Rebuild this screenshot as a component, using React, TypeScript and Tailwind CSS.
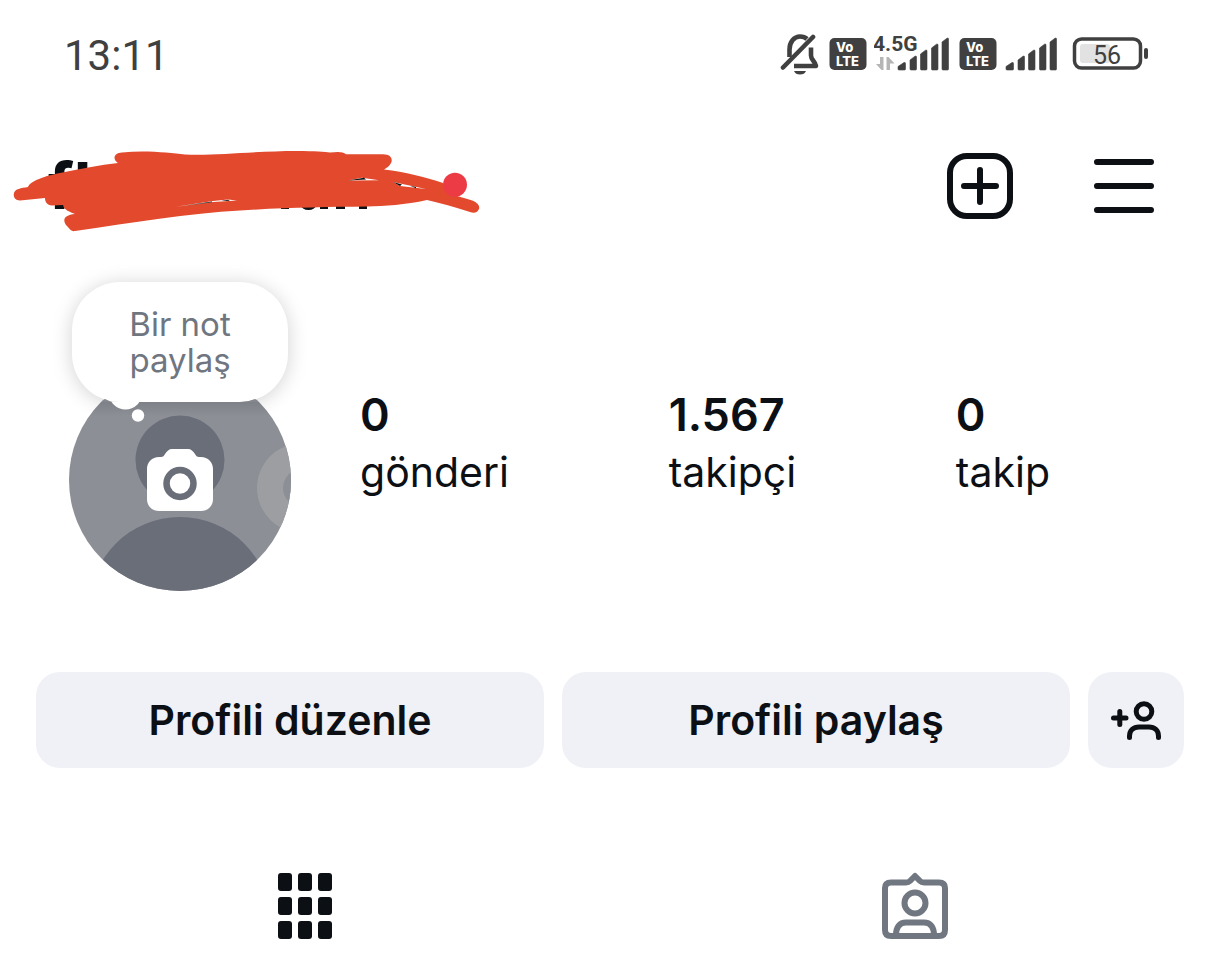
import React from "react";

const STATS = [
  { value: "0", label: "gönderi" },
  { value: "1.567", label: "takipçi" },
  { value: "0", label: "takip" },
];

const MutedBell = () => (
  <svg className="w-[42px] h-11" viewBox="780 32 42 44" fill="none" aria-label="Sessiz">
    <path
      d="M789.500 57V49.500C789.500 42 794 36.500 800 36.500C803 36.500 805.500 37.500 807 39M811 47.500V55.500C811 60 815 61 816 66H794"
      stroke="#404040"
      strokeWidth="4.600"
      strokeLinejoin="round"
    />
    <path d="M783 67.500L813 37" stroke="#404040" strokeWidth="4.600" strokeLinecap="round" />
    <path d="M794 71H806C805 73.500 803 74.500 800 74.500C797 74.500 795 73.500 794 71Z" fill="#404040" />
  </svg>
);

const VoLte = () => (
  <svg className="w-10 h-11" viewBox="0 0 40 44" aria-label="VoLTE">
    <rect x="1.500" y="6" width="37" height="32" rx="5" fill="#404040" />
    <text fill="#fff" fontSize="13" className="font-['Inter',sans-serif] font-extrabold">
      <tspan x="8" y="20">Vo</tspan>
      <tspan x="8" y="34">LTE</tspan>
    </text>
  </svg>
);

const Bars = () => (
  <path
    d="M0 37V34.500L6 30.500Q7.500 30 7.500 31.500V37Q7.500 38 6.500 38H1Q0 38 0 37ZM12 37V28L17 24.200Q18.500 23.500 18.500 25V37Q18.500 38 17.500 38H13Q12 38 12 37ZM22.500 37V22L27.500 18.200Q29 17.500 29 19V37Q29 38 28 38H23.500Q22.500 38 22.500 37ZM33.500 37V16L38.500 12.200Q40 11.500 40 13V37Q40 38 39 38H34.500Q33.500 38 33.500 37ZM44 37V10L49 6.200Q50.500 5.500 50.500 7V37Q50.500 38 49.500 38H45Q44 38 44 37Z"
    fill="#404040"
    stroke="#404040"
    strokeWidth="0.600"
  />
);

const StatusBar = () => (
  <div className="flex h-[108px] items-center justify-between pl-16 pr-[70px] font-['Roboto',sans-serif] text-[#404040]">
    <time className="mt-1 text-[42px] leading-[50px]">13:11</time>
    <div className="flex items-center gap-1.5">
      <MutedBell />
      <VoLte />
      <svg className="w-[78px] h-11" viewBox="0 0 78 44" aria-label="4.5G">
        <text x="-1" y="19" fontSize="21" fontWeight="700" fill="#404040">4.5G</text>
        <path d="M9.500 25V38H7.500L2 32H6V25ZM12.500 38V25H14.500L20.500 31.500H16V38Z" fill="#b5b5b5" />
        <g transform="translate(24 0)">
          <Bars />
        </g>
      </svg>
      <VoLte />
      <svg className="w-14 h-11" viewBox="-2 0 56 44" aria-label="Sinyal">
        <Bars />
      </svg>
      <svg className="w-[84px] h-11" viewBox="0 0 84 44" aria-label="Pil">
        <rect x="8.500" y="7" width="66" height="29" rx="7" fill="none" stroke="#404040" strokeWidth="3.500" />
        <rect x="14" y="12" width="30" height="19" rx="3" fill="#e2e2e2" />
        <rect x="78" y="16" width="4" height="11" rx="2" fill="#404040" />
        <text x="27" y="32" fontSize="25" fill="#404040">56</text>
      </svg>
    </div>
  </div>
);

const Header = () => (
  <header className="flex h-[156px] items-center justify-between pr-[60px]">
    <svg className="w-[500px] h-[100px]" viewBox="0 136 500 100">
      <text x="48" y="208.500" fontSize="65" fontWeight="700" fill="#0c1014">fl</text>
      <path
        d="M281 204H289V209H281ZM300 204H317Q315 210 308.500 210Q302 210 300 204ZM320 204H328V209H320ZM336 204H345V209H336ZM359 204H367V209H359Z"
        fill="#0c1014"
      />
      <path
        d="M14 193C15 189 21 188 28 187C30 181 45 176 60 173C80 169 100 165 118 163C112 159 114 153 122 152.500C147 150 170 153 185 154.500C215 156 255 151 297 151C315 151 325 152 330 152.500C338 151.500 343 151.500 346 154.300H383C391 154.500 393 159 391 163C389 167 386 168 384 169.500C405 172 425 177 443 183L448 193C457 196 466 198.500 473 200.700C478 203 480 206 479 209C477 213 474 213.500 470 212C455 207 440 203 427 200C405 205 385 206 367 206.500C325 207 285 207.500 240 210.500C190 213 130 223 75 231C71 232 69 228 66 225C62 219 65 215 75 214C70 212 64 210 63 205L52 205.500C47 205 45 202 45 198L20 200.500C15 200 13 197 14 193Z"
        fill="#e2492d"
      />
      <path d="M176 206.800L213 201L228 199.500L237 200.500L213 202ZM348 180.500L362 177.800L379 180.300ZM393 182L426 189L400 186Z" fill="#fff" />
      <path d="M184 205.800L212 201.500V202.300ZM221 201L228 199.700L230 200.700ZM348 180.500L364 177.700L366 179.500ZM393 182L402 184.500L400 186ZM410 185.700L416 187V188.200Z" fill="#0c1014" />
      <circle cx="455" cy="184.700" r="12" fill="#ec3b45" />
    </svg>
    <div className="flex gap-[72px]">
      <button aria-label="Oluştur">
        <svg className="size-[72px]" viewBox="0 0 72 72" fill="none" stroke="#0c1014" strokeWidth="6" strokeLinecap="round">
          <rect x="6" y="6" width="60" height="60" rx="17" />
          <path d="M20 36H52M36 20V52" />
        </svg>
      </button>
      <button aria-label="Menü">
        <svg className="size-[72px]" viewBox="0 0 72 72" fill="none" stroke="#0c1014" strokeWidth="6" strokeLinecap="round">
          <path d="M9 12H63M9 36H63M9 60H63" />
        </svg>
      </button>
    </div>
  </header>
);

const Avatar = () => (
  <div className="flex w-[222px] shrink-0 flex-col items-center">
    <button className="relative z-10 h-[120px] w-[216px] rounded-[48px] bg-white px-12 text-[33px] leading-9 text-[#6f7680] shadow-[0_2px_20px_rgba(0,0,0,0.18)]">
      Bir not paylaş
    </button>
    <button className="relative z-10 -mt-[33px]" aria-label="Profil fotoğrafı ekle">
      <svg className="size-[222px]" viewBox="0 0 222 222">
        <defs>
          <clipPath id="avatar">
            <circle cx="111" cy="111" r="111" />
          </clipPath>
          <clipPath id="below">
            <rect y="33" width="222" height="189" />
          </clipPath>
          <linearGradient id="shade" x2="0" y2="1">
            <stop stopColor="#000" stopOpacity="0.1" />
            <stop offset="1" stopColor="#000" stopOpacity="0" />
          </linearGradient>
        </defs>
        <g clipPath="url(#below)">
          <g clipPath="url(#avatar)">
            <rect width="222" height="222" fill="#8c8f96" />
            <circle cx="111" cy="91" r="44.500" fill="#6a6e79" />
            <circle cx="111" cy="239" r="91" fill="#6a6e79" />
            <circle cx="233" cy="119" r="45" fill="#9d9ea2" />
            <circle cx="233" cy="119" r="19" fill="#8c8f96" />
            <rect y="33" width="222" height="14" fill="url(#shade)" />
          </g>
          <circle cx="56.500" cy="24" r="16.500" fill="#fff" />
          <circle cx="69" cy="46.500" r="6.200" fill="#fff" />
        </g>
        <path d="M34 31L36 30Q40 32 43 33H32ZM188 31L186 30Q179 33 171 33H190Z" fill="#84878e" />
        <path
          d="M92 88C94 88 95 87 96 85C98 82 100 80 103 80H119C122 80 124 82 126 85C127 87 128 88 130 88H132C139 88 144 93 144 100V130C144 137 139 142 132 142H90C83 142 78 137 78 130V100C78 93 83 88 90 88Z"
          fill="#fff"
        />
        <circle cx="111" cy="114.500" r="13.500" fill="none" stroke="#6a6e79" strokeWidth="6.500" />
      </svg>
    </button>
  </div>
);

const Profile = () => (
  <section className="flex items-start pl-[69px] pr-[170px] pt-[18px]">
    <Avatar />
    <div className="ml-[69px] mt-[105px] flex flex-1 justify-between">
      {STATS.map((stat) => (
        <a key={stat.label} href="#" className="flex flex-col">
          <span className="text-[45px] font-semibold leading-[56px]">{stat.value}</span>
          <span className="text-[41px] leading-[58px]">{stat.label}</span>
        </a>
      ))}
    </div>
  </section>
);

const Actions = () => (
  <div className="mt-[81px] flex gap-[18px] px-9 text-[41px] font-semibold leading-[56px]">
    <button className="h-24 flex-1 rounded-3xl bg-[#f0f1f6]">Profili düzenle</button>
    <button className="h-24 flex-1 rounded-3xl bg-[#f0f1f6]">Profili paylaş</button>
    <button className="flex size-24 items-center justify-center rounded-3xl bg-[#f0f1f6]" aria-label="Kişileri keşfet">
      <svg className="size-[54px]" viewBox="0 0 54 54" fill="none" stroke="#0c1014" strokeWidth="5" strokeLinecap="round">
        <circle cx="35" cy="18.500" r="7.800" />
        <path d="M4.500 25H17M10.800 18.500V31.500M20.500 44.500V43C20.500 37.500 24.500 34 30 34H40C45.500 34 49.500 37.500 49.500 43V44.500" />
      </svg>
    </button>
  </div>
);

const Tabs = () => (
  <nav className="mt-[102px] grid grid-cols-2 pb-[30px]">
    <button className="flex justify-center" aria-label="Gönderiler">
      <svg className="size-[72px]" viewBox="0 0 72 72" fill="#0c1014">
        {[3, 27, 51].map((y) =>
          [9, 29, 49].map((x) => <rect key={`${x}-${y}`} x={x} y={y} width="14" height="18" rx="3" />)
        )}
      </svg>
    </button>
    <button className="flex justify-center" aria-label="Etiketlenenler">
      <svg className="size-[72px]" viewBox="0 0 72 72" fill="none" stroke="#717781" strokeWidth="6" strokeLinejoin="round">
        <path d="M12 12.500H27C29 12.500 30 12 31 11L36 6L41 11C42 12 43 12.500 45 12.500H60C64 12.500 66 14.500 66 18V60C66 64 64 66 60 66H12C8 66 6 64 6 60V18C6 14.500 8 12.500 12 12.500Z" />
        <circle cx="36" cy="33" r="10.500" />
        <path d="M17 65C17 57 20.500 52.500 27 52.500H45C51.500 52.500 55 57 55 65" />
      </svg>
    </button>
  </nav>
);

const App = () => {
  return (
    <main className="min-h-screen bg-white font-['Inter',sans-serif] text-[#0c1014]">
      <StatusBar />
      <Header />
      <Profile />
      <Actions />
      <Tabs />
    </main>
  );
};

export default App;
